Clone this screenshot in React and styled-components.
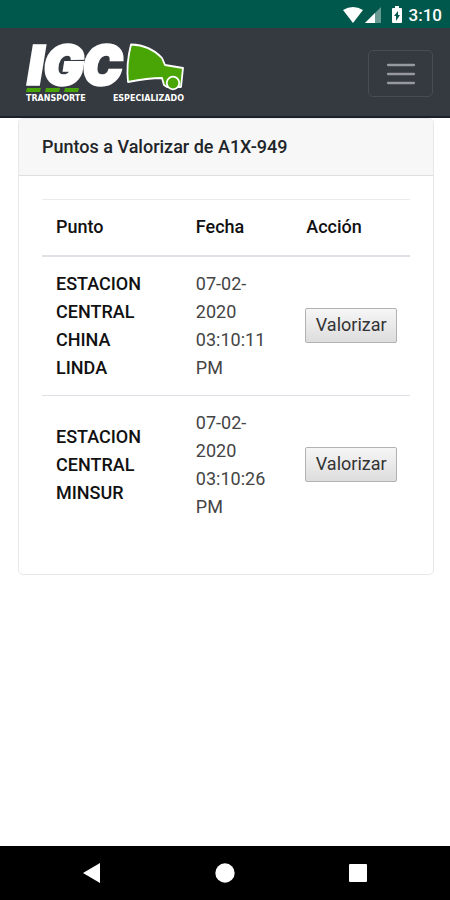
import React from "react";
import styled, { createGlobalStyle } from "styled-components";

const GlobalStyle = createGlobalStyle`
  *, *::before, *::after { box-sizing: border-box; }
  body {
    margin: 0;
    background: #fff;
    color: #212529;
    font-family: Roboto, "Noto Sans", sans-serif;
    font-size: 18px;
    line-height: 28px;
  }
`;

const Screen = styled.div`
  display: flex;
  flex-direction: column;
  min-height: 100vh;
`;

const StatusBar = styled.div`
  display: flex;
  align-items: center;
  justify-content: flex-end;
  height: 28px;
  padding: 2px 8px 0 0;
  background: #00574b;
  color: #fff;
`;

const StatusIcons = styled.svg`
  display: block;
  width: 62px;
  height: 20px;
  margin-right: 5px;
`;

const Clock = styled.time`
  font-size: 17px;
  font-weight: 500;
`;

const NavBar = styled.header`
  display: flex;
  align-items: center;
  justify-content: space-between;
  height: 90px;
  padding: 0 17px 0 26px;
  background: #343a40;
  border-bottom: 2px solid #1b212b;
`;

const Brand = styled.a`
  display: block;
  width: 160px;
  color: #fff;
  text-decoration: none;
`;

const LogoMark = styled.svg`
  display: block;
  width: 160px;
  height: 54px;
  overflow: visible;
`;

const Tagline = styled.span`
  display: flex;
  justify-content: space-between;
  padding-right: 2px;
  font: bold 8px/12px "DejaVu Sans", sans-serif;
`;

const MenuButton = styled.button`
  display: flex;
  align-items: center;
  justify-content: center;
  width: 65px;
  height: 47px;
  margin-top: 3px;
  padding: 0;
  background: transparent;
  border: 1px solid #484d52;
  border-radius: 5px;
`;

const Main = styled.main`
  flex: 1;
  padding: 0 16px 24px 18px;
`;

const Card = styled.section`
  border: 1px solid #e8e8e8;
  border-radius: 5px;
  overflow: hidden;
  background: #fff;
`;

const CardHeader = styled.h1`
  margin: 0;
  padding: 14px 23px;
  background: #f7f7f7;
  border-bottom: 1px solid #dfdfdf;
  font-size: 18px;
  line-height: 28px;
  font-weight: 500;
`;

const CardBody = styled.div`
  padding: 23px 23px 40px;
`;

const Table = styled.table`
  width: 100%;
  table-layout: fixed;
  border-collapse: collapse;
`;

const Column = styled.col`
  width: ${({ $share }) => $share}%;
`;

const HeadCell = styled.th`
  padding: 13px 0 14px 14px;
  border-top: 1px solid #e9ecef;
  border-bottom: 2px solid #dee2e6;
  color: #111;
  text-align: left;
  font-weight: 500;
`;

const NameCell = styled.th`
  padding: 13px 24px 13px 14px;
  border-top: 1px solid #dee2e6;
  color: #111;
  text-align: left;
  vertical-align: middle;
  font-weight: 500;
`;

const Cell = styled.td`
  padding: 13px 13px 13px 14px;
  border-top: 1px solid #dee2e6;
  color: #444;
  vertical-align: middle;
`;

const ActionCell = styled(Cell)`
  padding: 12px 13px 14px;
`;

const ActionButton = styled.button`
  display: block;
  width: 92px;
  height: 35px;
  padding: 0;
  background: linear-gradient(#f6f6f6, #dddddd);
  border: 1px solid #b2b2b2;
  border-radius: 2px;
  color: #333;
  font: 400 18px/28px Roboto, "Noto Sans", sans-serif;
`;

const SystemBar = styled.nav`
  display: flex;
  align-items: center;
  justify-content: space-between;
  height: 54px;
  padding: 0 80px;
  background: #000;
`;

const SystemButton = styled.button`
  display: flex;
  padding: 0;
  background: transparent;
  border: 0;
`;

const points = [
  { name: "ESTACION CENTRAL CHINA LINDA", date: "07-02-2020 03:10:11 PM" },
  { name: "ESTACION CENTRAL MINSUR", date: "07-02-2020 03:10:26 PM" },
];

const systemButtons = [
  { label: "Atrás", shape: <path d="M3 12L20 2v20z" /> },
  { label: "Inicio", shape: <circle cx="12" cy="12" r="9.7" /> },
  { label: "Recientes", shape: <rect x="3" y="3" width="18" height="18" rx="1" /> },
];

function Logo() {
  return (
    <Brand href="#" aria-label="IGC Transporte Especializado">
      <LogoMark viewBox="0 -1 160 54">
        <text
          y="44"
          fill="#fff"
          stroke="#fff"
          strokeWidth="3.4"
          fontFamily="Inter, sans-serif"
          fontSize="52"
          fontWeight="900"
          fontStyle="italic"
        >
          <tspan x="2">I</tspan>
          <tspan x="18">G</tspan>
          <tspan x="57">C</tspan>
        </text>
        <g fill="#49a406">
          <path d="M1 48h14l-1 4H0zM20 48h14l-1 4H19zM39 48h14l-1 4H38z" />
          <path
            d="M105 4.5Q100 24 102 42Q122 38 136 38L138 45L141 47H155L157 28L139 25L136 18Q124 5 105 4.5Z"
            stroke="#fff"
            strokeWidth="1.8"
            strokeLinejoin="round"
          />
          <circle cx="147" cy="43" r="6.3" stroke="#fff" strokeWidth="1.8" />
        </g>
      </LogoMark>
      <Tagline>
        <span>TRANSPORTE</span>
        <span>ESPECIALIZADO</span>
      </Tagline>
    </Brand>
  );
}

export default function App() {
  return (
    <>
      <GlobalStyle />
      <Screen>
        <StatusBar>
          <StatusIcons viewBox="0 0 62 20" fill="#fff" aria-hidden="true">
            <path d="M1 5Q11 -1 21 5L11 18z" />
            <path d="M39 2v16H23z" opacity=".4" />
            <path d="M33 8v10H23z" />
            <path
              fillRule="evenodd"
              d="M51 3h2V1h4v2h2q1 0 1 1v13q0 1-1 1h-8q-1 0-1-1V4q0-1 1-1zM56 6l-4 5h2v5l4-6h-2z"
            />
          </StatusIcons>
          <Clock>3:10</Clock>
        </StatusBar>
        <NavBar>
          <Logo />
          <MenuButton type="button" aria-label="Abrir menú">
            <svg width="34" height="34" viewBox="0 0 34 34" stroke="#96999d" strokeWidth="2.3" strokeLinecap="round">
              <path d="M4 8h26M4 17h26M4 26h26" />
            </svg>
          </MenuButton>
        </NavBar>
        <Main>
          <Card>
            <CardHeader>Puntos a Valorizar de A1X-949</CardHeader>
            <CardBody>
              <Table>
                <colgroup>
                  <Column $share={38} />
                  <Column $share={30} />
                  <Column $share={32} />
                </colgroup>
                <thead>
                  <tr>
                    <HeadCell scope="col">Punto</HeadCell>
                    <HeadCell scope="col">Fecha</HeadCell>
                    <HeadCell scope="col">Acción</HeadCell>
                  </tr>
                </thead>
                <tbody>
                  {points.map((point) => (
                    <tr key={point.name}>
                      <NameCell scope="row">{point.name}</NameCell>
                      <Cell>{point.date}</Cell>
                      <ActionCell>
                        <ActionButton type="button">Valorizar</ActionButton>
                      </ActionCell>
                    </tr>
                  ))}
                </tbody>
              </Table>
            </CardBody>
          </Card>
        </Main>
        <SystemBar aria-label="Navegación del sistema">
          {systemButtons.map(({ label, shape }) => (
            <SystemButton key={label} type="button" aria-label={label}>
              <svg width="24" height="24" viewBox="0 0 24 24" fill="#fff">
                {shape}
              </svg>
            </SystemButton>
          ))}
        </SystemBar>
      </Screen>
    </>
  );
}
